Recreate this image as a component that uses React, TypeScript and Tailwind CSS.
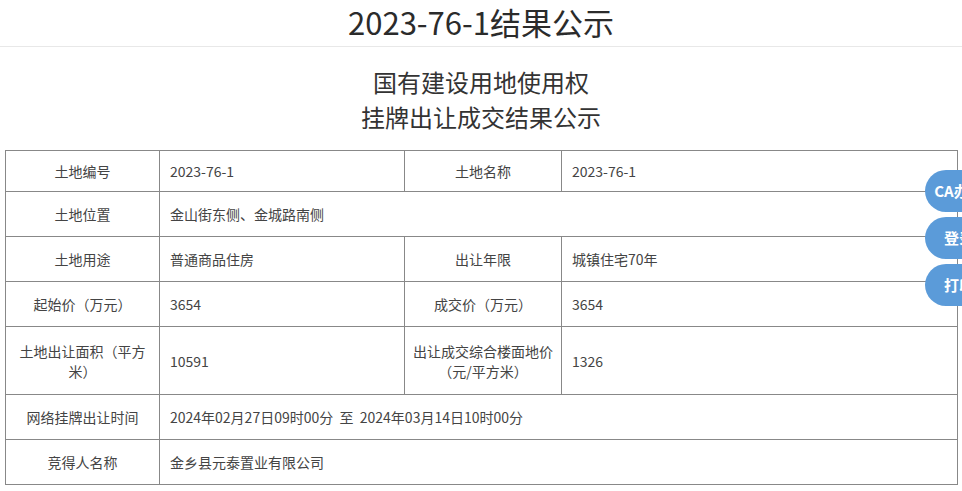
const rows: { h: string; cells: { text: string; label?: boolean; span?: number }[] }[] = [
  {
    h: 'h-[41px]',
    cells: [
      { text: '土地编号', label: true },
      { text: '2023-76-1' },
      { text: '土地名称', label: true },
      { text: '2023-76-1' },
    ],
  },
  {
    h: 'h-[45px]',
    cells: [
      { text: '土地位置', label: true },
      { text: '金山街东侧、金城路南侧', span: 3 },
    ],
  },
  {
    h: 'h-[45px]',
    cells: [
      { text: '土地用途', label: true },
      { text: '普通商品住房' },
      { text: '出让年限', label: true },
      { text: '城镇住宅70年' },
    ],
  },
  {
    h: 'h-[45px]',
    cells: [
      { text: '起始价（万元）', label: true },
      { text: '3654' },
      { text: '成交价（万元）', label: true },
      { text: '3654' },
    ],
  },
  {
    h: 'h-[68px]',
    cells: [
      { text: '土地出让面积（平方米）', label: true },
      { text: '10591' },
      { text: '出让成交综合楼面地价（元/平方米）', label: true },
      { text: '1326' },
    ],
  },
  {
    h: 'h-[45px]',
    cells: [
      { text: '网络挂牌出让时间', label: true },
      { text: '2024年02月27日09时00分\u00a0\u00a0至\u00a0\u00a02024年03月14日10时00分', span: 3 },
    ],
  },
  {
    h: 'h-[45px]',
    cells: [
      { text: '竞得人名称', label: true },
      { text: '金乡县元泰置业有限公司', span: 3 },
    ],
  },
]

export default function App() {
  return (
    <div className="relative w-[962px] h-[491px] overflow-hidden bg-white text-[#333] font-['Noto_Sans_CJK_SC','Noto_Sans',sans-serif]">
      {/* Page title */}
      <div className="h-[47px] border-b border-[#e8e8e8] flex items-center justify-center">
        <h1 className="text-[31px] leading-[40px] -mt-[3px] text-[#2b2b2b]">2023-76-1结果公示</h1>
      </div>

      {/* Subtitle */}
      <div className="pt-[17px] flex flex-col items-center text-[24px] leading-[35px] text-[#333]">
        <div>国有建设用地使用权</div>
        <div>挂牌出让成交结果公示</div>
      </div>

      {/* Result table */}
      <table className="mt-[16px] ml-[5px] w-[952px] table-fixed border-collapse text-[14px] leading-[20px] text-[#444]">
        <colgroup>
          <col className="w-[154px]" />
          <col className="w-[245px]" />
          <col className="w-[157px]" />
          <col className="w-[396px]" />
        </colgroup>
        <tbody>
          {rows.map((row, i) => (
            <tr key={i} className={row.h}>
              {row.cells.map((c, j) => (
                <td
                  key={j}
                  colSpan={c.span}
                  className={
                    c.label
                      ? 'border border-[#888] px-[8px] text-center align-middle'
                      : 'border border-[#888] px-[10px] text-left align-middle'
                  }
                >
                  {c.text}
                </td>
              ))}
            </tr>
          ))}
        </tbody>
      </table>

      {/* Floating side buttons */}
      <div className="absolute left-[925px] top-[170px] flex flex-col gap-[5px]">
        {['CA办理', '登录', '打印'].map((t) => (
          <div
            key={t}
            className="w-[68px] h-[42px] rounded-l-[21px] rounded-r-[21px] bg-[#5b9bd9] flex items-center justify-center text-white text-[15px] font-bold"
          >
            {t}
          </div>
        ))}
      </div>
    </div>
  )
}
